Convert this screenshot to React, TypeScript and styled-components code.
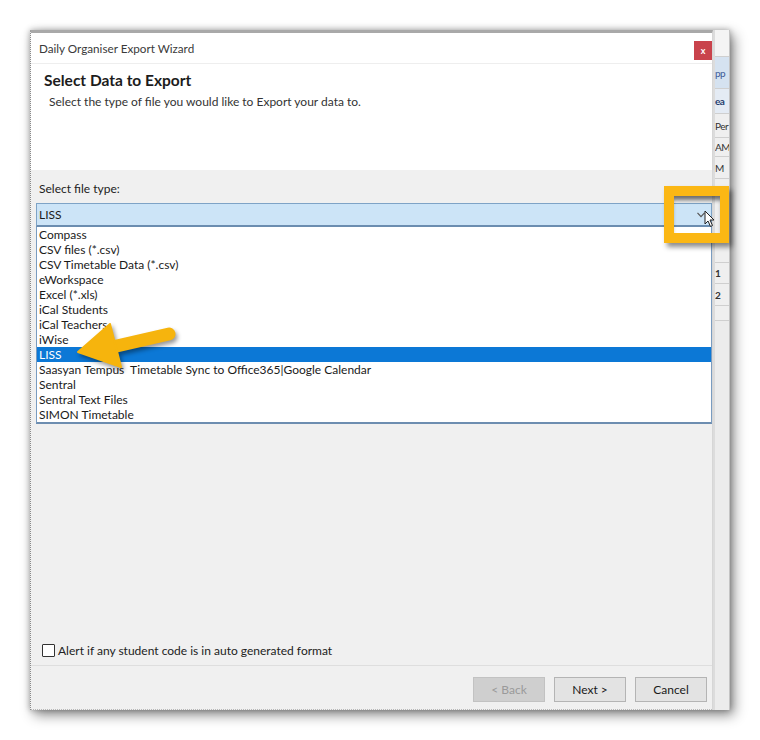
import React from "react";
import styled, { createGlobalStyle } from "styled-components";

const Global = createGlobalStyle`
  html, body { margin: 0; padding: 0; background: #fff; }
  body { font-family: Lato, "Liberation Sans", sans-serif; color: #1e1e1e; }
  * { box-sizing: border-box; }
`;

const Page = styled.div`
  width: 760px;
  height: 740px;
  overflow: hidden;
  background: #fff;
  padding: 30px 0 0 30px;
`;

const Frame = styled.div`
  position: relative;
  width: 700px;
  height: 680px;
  display: flex;
  background: #f0f0f0;
  box-shadow: 0 0 6px rgba(0, 0, 0, 0.3), 4px 5px 12px rgba(0, 0, 0, 0.45);
`;

const Dialog = styled.div`
  width: 683px;
  display: flex;
  flex-direction: column;
  border-top: 3px solid #a9a9a9;
  border-left: 1px dotted #8a8a8a;
  border-right: 1px solid #d6d6d6;
`;

const TitleBar = styled.div`
  height: 30px;
  display: flex;
  justify-content: space-between;
  background: #fff;
  padding-left: 8px;
`;

const TitleText = styled.span`
  font-size: 11.7px;
  line-height: 30px;
  color: #3a3a3a;
`;

const CloseBtn = styled.div`
  width: 18px;
  height: 19px;
  margin-top: 8px;
  background: #c9434c;
  color: #fff;
  font-size: 9px;
  font-weight: bold;
  display: flex;
  align-items: center;
  justify-content: center;
`;

const Header = styled.div`
  height: 107px;
  background: #fff;
  border-top: 1px solid #eeeeee;
  padding: 7px 0 0 13px;
`;

const HeaderTitle = styled.div`
  font-size: 15.5px;
  font-weight: bold;
  line-height: 18px;
  color: #1c1c1c;
`;

const HeaderSub = styled.div`
  font-size: 12px;
  line-height: 14px;
  margin: 6px 0 0 5px;
  color: #333;
`;

const Body = styled.div`
  flex: 1;
  display: flex;
  flex-direction: column;
  background: #f0f0f0;
  padding: 12px 0 7px 5px;
`;

const FieldLabel = styled.div`
  font-size: 12px;
  line-height: 14px;
  padding-left: 3px;
  color: #222;
`;

const Combo = styled.div`
  margin-top: 7px;
  height: 24px;
  display: flex;
  align-items: center;
  justify-content: space-between;
  background: #cce4f7;
  border: 1px solid #7ea3c6;
  border-bottom: 2px solid #6b8db0;
  padding: 0 6px 0 2px;
  font-size: 12px;
  color: #1a1a1a;
`;

const ListBox = styled.div`
  background: #fff;
  border: 1px solid #7a9cc0;
  border-top: none;
  border-bottom: 2px solid #6d8db0;
`;

const Item = styled.div<{ $selected?: boolean }>`
  height: 15px;
  line-height: 15px;
  padding-left: 2px;
  font-size: 12px;
  white-space: pre;
  color: ${(p) => (p.$selected ? "#fff" : "#1a1a1a")};
  background: ${(p) => (p.$selected ? "#0c78d6" : "transparent")};
`;

const Spacer = styled.div`
  flex: 1;
`;

const CheckRow = styled.label`
  display: flex;
  align-items: center;
  gap: 3px;
  padding-left: 6px;
  font-size: 12px;
  color: #222;
`;

const CheckBox = styled.span`
  width: 13px;
  height: 13px;
  border: 1px solid #333;
  border-radius: 1px;
  background: #fff;
`;

const Footer = styled.div`
  height: 45px;
  display: flex;
  justify-content: flex-end;
  align-items: flex-start;
  gap: 9px;
  padding: 11px 5px 0 0;
  border-top: 1px solid #dedede;
  border-bottom: 1px dotted #b8b8b8;
`;

const Button = styled.div<{ $disabled?: boolean }>`
  width: 72px;
  height: 25px;
  display: flex;
  align-items: center;
  justify-content: center;
  font-size: 12px;
  border: 1px solid ${(p) => (p.$disabled ? "#c2c2c2" : "#b4b4b4")};
  background: ${(p) => (p.$disabled ? "#cfcfcf" : "#e3e3e3")};
  color: ${(p) => (p.$disabled ? "#9a9a9a" : "#1a1a1a")};
`;

const Strip = styled.div`
  width: 17px;
  display: flex;
  flex-direction: column;
  background: #ececec;
  border-left: 2px solid #dcdcdc;
  border-right: 1px solid #c4c4c4;
  overflow: hidden;
`;

const StripCell = styled.div<{ $h: number; $bg?: string; $bold?: boolean; $color?: string }>`
  height: ${(p) => p.$h}px;
  flex-shrink: 0;
  background: ${(p) => p.$bg || "#efefef"};
  border-bottom: 1px solid #cfcfcf;
  font-size: 10px;
  font-weight: ${(p) => (p.$bold ? "bold" : "normal")};
  color: ${(p) => p.$color || "#333"};
  display: flex;
  align-items: center;
  white-space: nowrap;
  letter-spacing: -0.5px;
`;

const Highlight = styled.div`
  position: absolute;
  left: 634px;
  top: 156px;
  width: 65px;
  height: 57px;
  border: 10px solid #fbb714;
  border-right-width: 9px;
  box-shadow: 3px 4px 5px rgba(0, 0, 0, 0.45), inset 0 6px 4px -2px rgba(0, 0, 0, 0.55);
`;

const Cursor = styled.svg`
  position: absolute;
  left: 674px;
  top: 180px;
`;

const Pointer = styled.svg`
  position: absolute;
  left: 40px;
  top: 287px;
  filter: drop-shadow(2px 3px 2px rgba(0, 0, 0, 0.4));
`;

const items = [
  "Compass",
  "CSV files (*.csv)",
  "CSV Timetable Data (*.csv)",
  "eWorkspace",
  "Excel (*.xls)",
  "iCal Students",
  "iCal Teachers",
  "iWise",
  "LISS",
  "Saasyan Tempus  Timetable Sync to Office365|Google Calendar",
  "Sentral",
  "Sentral Text Files",
  "SIMON Timetable",
];

export default function App() {
  return (
    <Page>
      <Global />
      <Frame>
        <Dialog>
          <TitleBar>
            <TitleText>Daily Organiser Export Wizard</TitleText>
            <CloseBtn>x</CloseBtn>
          </TitleBar>
          <Header>
            <HeaderTitle>Select Data to Export</HeaderTitle>
            <HeaderSub>Select the type of file you would like to Export your data to.</HeaderSub>
          </Header>
          <Body>
            <FieldLabel>Select file type:</FieldLabel>
            <Combo>
              <span>LISS</span>
              <svg width="8" height="6" viewBox="0 0 8 6">
                <path d="M0.5 0.8 L4 4.6 L7.5 0.8" fill="none" stroke="#555" strokeWidth="1.2" />
              </svg>
            </Combo>
            <ListBox>
              {items.map((it) => (
                <Item key={it} $selected={it === "LISS"}>
                  {it}
                </Item>
              ))}
            </ListBox>
            <Spacer />
            <CheckRow>
              <CheckBox />
              Alert if any student code is in auto generated format
            </CheckRow>
          </Body>
          <Footer>
            <Button $disabled>&lt; Back</Button>
            <Button>Next &gt;</Button>
            <Button>Cancel</Button>
          </Footer>
        </Dialog>
        <Strip>
          <StripCell $h={27} $bg="#f4f4f4" />
          <StripCell $h={32} $bg="#d5e2f0" $color="#3d5a96">pp</StripCell>
          <StripCell $h={25} $bg="#e4ebf4" $bold $color="#27406e">ea</StripCell>
          <StripCell $h={24}>Per</StripCell>
          <StripCell $h={19}>AM</StripCell>
          <StripCell $h={22}>M</StripCell>
          <StripCell $h={84} />
          <StripCell $h={21} $bold>1</StripCell>
          <StripCell $h={22} $bold>2</StripCell>
          <StripCell $h={15} />
        </Strip>
        <Highlight />
        <Cursor width="12" height="18" viewBox="0 0 12 18">
          <path d="M1 1 L1 14 L4 11 L6.5 16.5 L8.5 15.5 L6 10 L10 10 Z" fill="#fff" stroke="#222" strokeWidth="1" strokeLinejoin="round" />
        </Cursor>
        <Pointer width="115" height="65" viewBox="0 0 115 65">
          <line x1="38" y1="31" x2="99" y2="17" stroke="#f6b40d" strokeWidth="13" strokeLinecap="round" />
          <polygon points="8,35 40,7 51,50" fill="#f6b40d" stroke="#f6b40d" strokeWidth="2" strokeLinejoin="round" />
        </Pointer>
      </Frame>
    </Page>
  );
}
